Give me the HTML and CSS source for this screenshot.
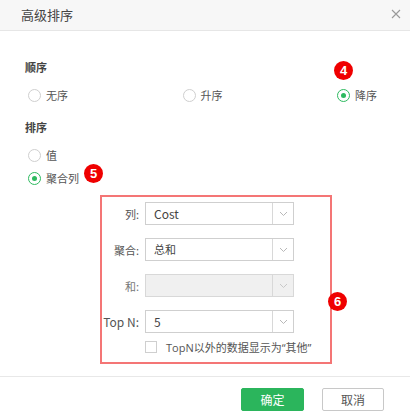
FILE: index.html
```html
<!DOCTYPE html>
<html lang="zh">
<head>
<meta charset="utf-8">
<link rel="stylesheet" href="styles.css">
</head>
<body>
<div class="dialog">
  <div class="header">
    <span class="title">高级排序</span>
    <svg class="close" width="10" height="10" viewBox="0 0 10 10"><path d="M1 1L9 9M9 1L1 9" stroke="#9a9a9a" stroke-width="1.1" fill="none"/></svg>
  </div>
  <div class="body">
    <div class="section-title first">顺序</div>
    <div class="radio-row spread">
      <label class="radio"><span class="circle"></span><span>无序</span></label>
      <label class="radio"><span class="circle"></span><span>升序</span></label>
      <label class="radio"><span class="circle checked"></span><span>降序</span></label>
    </div>
    <div class="section-title second">排序</div>
    <div class="radio-row single r1">
      <label class="radio"><span class="circle"></span><span>值</span></label>
    </div>
    <div class="radio-row single r2">
      <label class="radio"><span class="circle checked"></span><span>聚合列</span></label>
    </div>
    <div class="box">
      <div class="form-row">
        <span class="label">列:</span>
        <div class="select"><span class="value latin">Cost</span><span class="arrow"><svg width="9" height="6" viewBox="0 0 9 6"><path d="M1 1L4.5 4.5L8 1" stroke="#b8b8b8" stroke-width="1" fill="none"/></svg></span></div>
      </div>
      <div class="form-row">
        <span class="label">聚合:</span>
        <div class="select"><span class="value">总和</span><span class="arrow"><svg width="9" height="6" viewBox="0 0 9 6"><path d="M1 1L4.5 4.5L8 1" stroke="#b8b8b8" stroke-width="1" fill="none"/></svg></span></div>
      </div>
      <div class="form-row">
        <span class="label muted">和:</span>
        <div class="select disabled"><span class="value"></span><span class="arrow"><svg width="9" height="6" viewBox="0 0 9 6"><path d="M1 1L4.5 4.5L8 1" stroke="#c8c8c8" stroke-width="1" fill="none"/></svg></span></div>
      </div>
      <div class="form-row last">
        <span class="label latin">Top N:</span>
        <div class="select"><span class="value latin">5</span><span class="arrow"><svg width="9" height="6" viewBox="0 0 9 6"><path d="M1 1L4.5 4.5L8 1" stroke="#b8b8b8" stroke-width="1" fill="none"/></svg></span></div>
      </div>
      <div class="check-row">
        <span class="checkbox"></span>
        <span>TopN以外的数据显示为“其他”</span>
      </div>
    </div>
  </div>
  <div class="footer">
    <button class="btn primary">确定</button>
    <button class="btn">取消</button>
  </div>
  <span class="badge b4">4</span>
  <span class="badge b5">5</span>
  <span class="badge b6">6</span>
</div>
</body>
</html>
```

FILE: styles.css
```css
* { box-sizing: border-box; }
html, body { margin: 0; padding: 0; }
body {
  font-family: "Noto Sans CJK SC", sans-serif;
  font-size: 11px;
  color: #555;
  background: #fff;
}
.dialog {
  position: relative;
  width: 410px;
  height: 419px;
  display: flex;
  flex-direction: column;
  background: #fff;
}
.header {
  height: 31px;
  background: #f7f7f7;
  border-bottom: 1px solid #e6e6e6;
  display: flex;
  align-items: center;
  justify-content: space-between;
  padding: 0 9px 1px 21px;
}
.title {
  font-size: 13px;
  color: #444;
  line-height: 30px;
}
.close { display: block; margin-top: -2px; }
.body {
  flex: 1;
  padding: 0 0 0 25px;
}
.section-title {
  font-size: 11px;
  font-weight: 600;
  color: #444;
  line-height: 16px;
  height: 16px;
}
.section-title.first { margin-top: 28px; }
.section-title.second { margin-top: 16px; }
.radio-row {
  display: flex;
  height: 16px;
  padding-left: 3px;
}
.radio-row.spread {
  margin-top: 12px;
  justify-content: space-between;
  padding-right: 33px;
}
.radio-row.r1 { margin-top: 12px; }
.radio-row.r2 { margin-top: 7px; }
.radio {
  display: flex;
  align-items: center;
  gap: 5px;
  line-height: 16px;
  color: #555;
}
.circle {
  width: 13px;
  height: 13px;
  border-radius: 50%;
  border: 1px solid #cfcfcf;
  background: #fff;
  position: relative;
  flex: none;
}
.circle.checked { border-color: #2dba5f; }
.circle.checked::after {
  content: "";
  position: absolute;
  left: 3px;
  top: 3px;
  width: 5px;
  height: 5px;
  border-radius: 50%;
  background: #2dba5f;
}
.box {
  margin-top: 9px;
  margin-left: 75px;
  width: 232px;
  height: 169px;
  border: 2px solid #f47575;
  padding-top: 5px;
}
.form-row {
  display: flex;
  align-items: center;
  height: 23px;
  margin-bottom: 13px;
}
.form-row.last { margin-bottom: 8px; }
.label {
  width: 37px;
  text-align: right;
  margin-right: 6px;
  color: #555;
  white-space: nowrap;
}
.latin { font-size: 12px; }
.label.muted { color: #777; }
.select {
  width: 149px;
  height: 23px;
  border: 1px solid #cfcfcf;
  background: #fff;
  display: flex;
}
.select.disabled { background: #f0f0f0; border-color: #d8d8d8; }
.select .value {
  flex: 1;
  padding-left: 8px;
  line-height: 21px;
  color: #444;
}
.select .arrow {
  width: 21px;
  border-left: 1px solid #d8d8d8;
  display: flex;
  align-items: center;
  justify-content: center;
}
.check-row {
  display: flex;
  align-items: center;
  margin-left: 43px;
  height: 12px;
  gap: 9px;
  color: #555;
  font-family: "Open Sans", "Noto Sans CJK SC", sans-serif;
}
.checkbox {
  width: 12px;
  height: 12px;
  border: 1px solid #cfcfcf;
  background: #fff;
  flex: none;
}
.footer {
  height: 43px;
  border-top: 1px solid #e8e8e8;
  display: flex;
  justify-content: flex-end;
  align-items: flex-start;
  padding: 11px 26px 0 0;
  gap: 18px;
}
.btn {
  width: 62px;
  height: 23px;
  border: 1px solid #c8c8c8;
  background: #fff;
  border-radius: 2px;
  font-family: "Noto Sans CJK SC", sans-serif;
  font-size: 12px;
  color: #555;
  padding: 0;
  line-height: 21px;
}
.btn.primary {
  width: 63px;
  background: #2bb55c;
  border-color: #2bb55c;
  color: #fff;
}
.badge {
  position: absolute;
  width: 19px;
  height: 19px;
  border-radius: 50%;
  background: #ef0000;
  color: #fff;
  font-family: "Liberation Sans", Arial, sans-serif;
  font-weight: bold;
  font-size: 13px;
  line-height: 19px;
  text-align: center;
}
.b4 { left: 334px; top: 61px; }
.b5 { left: 84px; top: 164px; }
.b6 { left: 328px; top: 292px; }
```
